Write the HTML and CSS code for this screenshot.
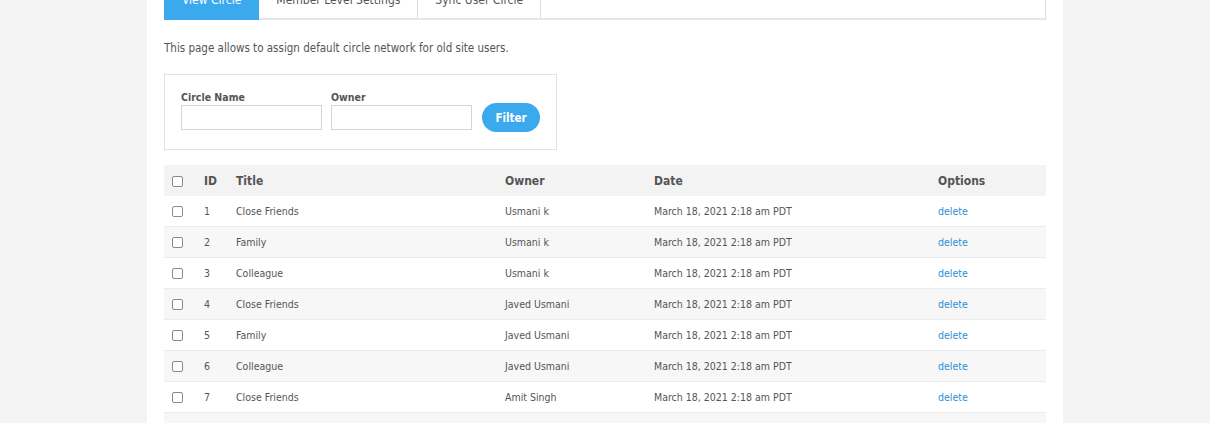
FILE: index.html
```html
<!DOCTYPE html>
<html>
<head>
<meta charset="utf-8">
<link rel="stylesheet" href="styles.css">
</head>
<body>
<div class="panel">
  <div class="tabs">
    <a class="tab active">View Circle</a>
    <a class="tab">Member Level Settings</a>
    <a class="tab">Sync User Circle</a>
  </div>
  <p class="desc">This page allows to assign default circle network for old site users.</p>
  <form class="filter">
    <div class="field">
      <label>Circle Name</label>
      <input type="text" class="inp inp1">
    </div>
    <div class="field">
      <label>Owner</label>
      <input type="text" class="inp inp2">
    </div>
    <button type="button" class="btn">Filter</button>
  </form>
  <table class="grid">
    <colgroup>
      <col class="c-chk"><col class="c-id"><col class="c-title"><col class="c-owner"><col class="c-date"><col class="c-opt">
    </colgroup>
    <thead>
      <tr><th><span class="chk"></span></th><th>ID</th><th>Title</th><th>Owner</th><th>Date</th><th>Options</th></tr>
    </thead>
    <tbody>
      <tr><td><span class="chk"></span></td><td>1</td><td>Close Friends</td><td>Usmani k</td><td>March 18, 2021 2:18 am PDT</td><td><a class="del">delete</a></td></tr>
      <tr><td><span class="chk"></span></td><td>2</td><td>Family</td><td>Usmani k</td><td>March 18, 2021 2:18 am PDT</td><td><a class="del">delete</a></td></tr>
      <tr><td><span class="chk"></span></td><td>3</td><td>Colleague</td><td>Usmani k</td><td>March 18, 2021 2:18 am PDT</td><td><a class="del">delete</a></td></tr>
      <tr><td><span class="chk"></span></td><td>4</td><td>Close Friends</td><td>Javed Usmani</td><td>March 18, 2021 2:18 am PDT</td><td><a class="del">delete</a></td></tr>
      <tr><td><span class="chk"></span></td><td>5</td><td>Family</td><td>Javed Usmani</td><td>March 18, 2021 2:18 am PDT</td><td><a class="del">delete</a></td></tr>
      <tr><td><span class="chk"></span></td><td>6</td><td>Colleague</td><td>Javed Usmani</td><td>March 18, 2021 2:18 am PDT</td><td><a class="del">delete</a></td></tr>
      <tr><td><span class="chk"></span></td><td>7</td><td>Close Friends</td><td>Amit Singh</td><td>March 18, 2021 2:18 am PDT</td><td><a class="del">delete</a></td></tr>
      <tr><td><span class="chk"></span></td><td>8</td><td>Family</td><td>Amit Singh</td><td>March 18, 2021 2:18 am PDT</td><td><a class="del">delete</a></td></tr>
    </tbody>
  </table>
</div>
</body>
</html>
```
FILE: styles.css
```css
html, body {
  margin: 0;
  padding: 0;
}
body {
  background: #f4f4f4;
  font-family: Tahoma, "DejaVu Sans Condensed", sans-serif;
  color: #555;
  overflow: hidden;
}
.panel {
  width: 882px;
  margin: 0 auto;
  padding: 0 17px 40px;
  background: #fff;
  min-height: 500px;
}
.tabs {
  display: flex;
  margin-top: -20px;
  height: 40px;
  border: 1px solid #ddd;
  border-bottom: 2px solid #e6e6e6;
  box-sizing: border-box;
}
.tab {
  display: flex;
  align-items: center;
  padding: 0 17px;
  font-size: 12px;
  color: #555;
  border-right: 1px solid #ddd;
}
.tab.active {
  background: #3aa9ee;
  color: #fff;
  border-right: none;
  margin: -1px 0 -2px -1px;
  padding: 0 18px;
}
.desc {
  margin: 21px 0 0;
  font-size: 11.5px;
  line-height: 15px;
}
.filter {
  margin: 18px 0 0;
  width: 393px;
  height: 76px;
  box-sizing: border-box;
  border: 1px solid #e2e2e2;
  padding: 0 16px 19px;
  display: flex;
  align-items: flex-end;
}
.field {
  display: flex;
  flex-direction: column;
  margin-right: 9px;
}
.field label {
  font-size: 10.5px;
  font-weight: bold;
  color: #555;
  line-height: 12px;
  margin-bottom: 2px;
}
.inp {
  height: 25px;
  box-sizing: border-box;
  border: 1px solid #d4d4d4;
  margin: 0;
  padding: 0 4px;
  outline: none;
}
.inp1 { width: 141px; }
.inp2 { width: 141px; }
.btn {
  margin: 0 0 -2px 1px;
  width: 59px;
  height: 29px;
  border: none;
  border-radius: 15px;
  background: #3aa9ee;
  color: #fff;
  font-family: Tahoma, "DejaVu Sans Condensed", sans-serif;
  font-weight: bold;
  font-size: 11.5px;
  padding: 0;
}
.grid {
  margin-top: 15px;
  width: 882px;
  table-layout: fixed;
  border-collapse: collapse;
}
.c-chk { width: 32px; }
.c-id { width: 32px; }
.c-title { width: 269px; }
.c-owner { width: 149px; }
.c-date { width: 284px; }
.c-opt { width: 116px; }
.grid th, .grid td {
  height: 30px;
  padding: 0 8px;
  text-align: left;
  vertical-align: middle;
  white-space: nowrap;
}
.grid th {
  height: 31px;
  background: #f3f3f3;
  font-size: 12px;
  font-weight: bold;
  color: #555;
}
.grid td {
  font-size: 10.5px;
  border-bottom: 1px solid #ececec;
}
.grid tbody tr:nth-child(even) td {
  background: #f7f7f7;
}
.chk {
  display: block;
  width: 9px;
  height: 9px;
  border: 1px solid #8a8a8a;
  border-radius: 2px;
  background: #fff;
  margin-top: 1px;
}
.del {
  color: #2a8fd6;
}
```
